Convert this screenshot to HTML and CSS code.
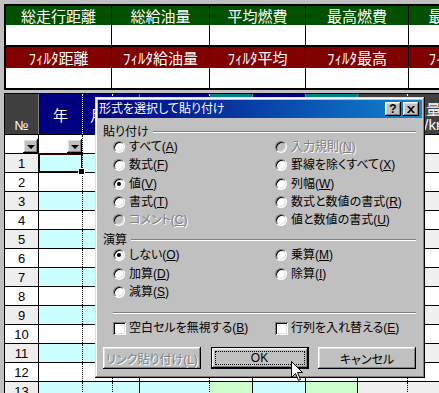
FILE: index.html
```html
<!DOCTYPE html>
<html lang="ja">
<head>
  <meta charset="UTF-8">
  <title>形式を選択して貼り付け</title>
  <link rel="stylesheet" href="styles.css">
</head>
<body>
  <div class="summary">
    <div class="sum-row sum-green"><div>総走行距離</div><div>総給油量</div><div>平均燃費</div><div>最高燃費</div><div>最低燃費</div></div>
    <div class="sum-row sum-blank"><div></div><div></div><div></div><div></div><div></div></div>
    <div class="sum-row sum-red"><div>ﾌｨﾙﾀ距離</div><div>ﾌｨﾙﾀ給油量</div><div>ﾌｨﾙﾀ平均</div><div>ﾌｨﾙﾀ最高</div><div>ﾌｨﾙﾀ最低</div></div>
    <div class="sum-row sum-blank"><div></div><div></div><div></div><div></div><div></div></div>
  </div>

  <div class="sheet">
    <div class="row head">
      <div class="no">№</div><div>年</div><div>月</div><div></div><div></div><div></div><div></div><div></div><div></div><div class="multi">油量<br>(L/km)</div>
    </div>
    <div class="row filter">
      <div><span class="dd"></span></div><div><span class="dd"></span></div><div></div><div></div><div></div><div></div><div></div><div></div><div></div><div></div>
    </div>
    <div class="row odd"><div>1</div><div class="sel"></div><div></div><div></div><div></div><div></div><div></div><div></div><div></div><div></div></div>
    <div class="row"><div>2</div><div></div><div></div><div></div><div></div><div></div><div></div><div></div><div></div><div></div></div>
    <div class="row odd"><div>3</div><div></div><div></div><div></div><div></div><div></div><div></div><div></div><div></div><div></div></div>
    <div class="row"><div>4</div><div></div><div></div><div></div><div></div><div></div><div></div><div></div><div></div><div></div></div>
    <div class="row odd"><div>5</div><div></div><div></div><div></div><div></div><div></div><div></div><div></div><div></div><div></div></div>
    <div class="row"><div>6</div><div></div><div></div><div></div><div></div><div></div><div></div><div></div><div></div><div></div></div>
    <div class="row odd"><div>7</div><div></div><div></div><div></div><div></div><div></div><div></div><div></div><div></div><div></div></div>
    <div class="row"><div>8</div><div></div><div></div><div></div><div></div><div></div><div></div><div></div><div></div><div></div></div>
    <div class="row odd"><div>9</div><div></div><div></div><div></div><div></div><div></div><div></div><div></div><div></div><div></div></div>
    <div class="row"><div>10</div><div></div><div></div><div></div><div></div><div></div><div></div><div></div><div></div><div></div></div>
    <div class="row odd"><div>11</div><div></div><div></div><div></div><div></div><div></div><div></div><div></div><div></div><div></div></div>
    <div class="row"><div>12</div><div></div><div></div><div></div><div></div><div></div><div></div><div></div><div></div><div></div></div>
    <div class="row odd"><div>13</div><div></div><div></div><div></div><div></div><div></div><div></div><div></div><div></div><div></div></div>
  </div>

  <div class="dialog">
    <div class="titlebar">
      <span class="title">形式を選択して貼り付け</span>
      <span class="tbtn help">?</span>
      <span class="tbtn close"><svg width="8" height="7" viewBox="0 0 8 7"><path d="M0 0h2l2 2.2L6 0h2L5 3.5 8 7H6L4 4.8 2 7H0l3-3.5z" fill="#000"/></svg></span>
    </div>
    <div class="dlg-body">
      <div class="group-head"><span>貼り付け</span><i class="groove"></i></div>
      <div class="options">
        <label class="opt"><span class="radio"></span>すべて(<u>A</u>)</label>
        <label class="opt disabled"><span class="radio"></span>入力規則(<u>N</u>)</label>
        <label class="opt"><span class="radio"></span>数式(<u>F</u>)</label>
        <label class="opt"><span class="radio"></span>罫線を除くすべて(<u>X</u>)</label>
        <label class="opt"><span class="radio on"></span>値(<u>V</u>)</label>
        <label class="opt"><span class="radio"></span>列幅(<u>W</u>)</label>
        <label class="opt"><span class="radio"></span>書式(<u>T</u>)</label>
        <label class="opt"><span class="radio"></span>数式と数値の書式(<u>R</u>)</label>
        <label class="opt disabled"><span class="radio"></span>コメント(<u>C</u>)</label>
        <label class="opt"><span class="radio"></span>値と数値の書式(<u>U</u>)</label>
      </div>
      <div class="group-head second"><span>演算</span><i class="groove"></i></div>
      <div class="options">
        <label class="opt"><span class="radio on"></span>しない(<u>O</u>)</label>
        <label class="opt"><span class="radio"></span>乗算(<u>M</u>)</label>
        <label class="opt"><span class="radio"></span>加算(<u>D</u>)</label>
        <label class="opt"><span class="radio"></span>除算(<u>I</u>)</label>
        <label class="opt"><span class="radio"></span>減算(<u>S</u>)</label>
      </div>
      <i class="groove separator"></i>
      <div class="checks">
        <label class="opt"><span class="check"></span>空白セルを無視する(<u>B</u>)</label>
        <label class="opt"><span class="check"></span>行列を入れ替える(<u>E</u>)</label>
      </div>
      <div class="actions">
        <span class="btn disabled">リンク貼り付け(L)</span>
        <span class="btn default">OK</span>
        <span class="btn">キャンセル</span>
      </div>
    </div>
  </div>

  <svg class="cursor" width="13" height="21" viewBox="0 0 13 21">
    <path d="M0.5 0.5V16.5L4.5 12.5L7.5 19.5L9.5 18.5L6.5 11.5H11.5Z" fill="#fff" stroke="#000"/>
  </svg>
</body>
</html>
```

FILE: styles.css
```css
* { box-sizing: border-box; }
html, body { margin: 0; height: 100%; }
body { background: #c0c0c0; overflow: hidden; position: relative; font-family: "Noto Sans CJK JP", "Liberation Sans", sans-serif; font-feature-settings: "palt"; }

/* summary block at the top */
.summary { margin: 4px 0 0 4px; width: 560px; border: 2px solid #000; }
.sum-row { display: flex; }
.sum-row > div { flex: none; border-right: 1px solid #000; display: flex; align-items: center; justify-content: center; color: #fff; font-size: 15px; line-height: 1; }
.sum-row > div:nth-child(1) { width: 106px; }
.sum-row > div:nth-child(2) { width: 98px; }
.sum-row > div:nth-child(3) { width: 96px; }
.sum-row > div:nth-child(4) { width: 103px; }
.sum-row > div:nth-child(5) { width: 100px; }
.sum-green { height: 19px; background: #005000; }
.sum-blank { height: 20px; background: #fff; }
.sum-red { height: 23px; background: #800000; border-top: 2px solid #000; }

/* worksheet */
.sheet { margin: 3px 0 0 4px; width: 620px; border-left: 1px solid #000; border-top: 1px solid #000; }
.row { display: flex; height: 19px; border-bottom: 1px solid #000; background: #fff; }
.row > div { flex: none; border-right: 1px solid #000; }
.row > div:nth-child(1) { width: 34px; }
.row > div:nth-child(2) { width: 44px; border-right-style: dotted; }
.row > div:nth-child(3) { width: 30px; border-right-style: dotted; }
.row > div:nth-child(4) { width: 27px; }
.row > div:nth-child(5) { width: 70px; border-right-style: dotted; }
.row > div:nth-child(6) { width: 43px; }
.row > div:nth-child(7) { width: 53px; }
.row > div:nth-child(8) { width: 52px; }
.row > div:nth-child(9) { width: 50px; border-right-style: dotted; }
.row > div:nth-child(10) { width: 92px; }

.row > div:first-child { display: flex; justify-content: center; align-items: flex-end; font: 13px/16px "Liberation Sans", sans-serif; }
.odd > div:first-child { background: #eeeeee; }
.odd > div:nth-child(n+2):nth-child(-n+5), .odd > div:nth-child(7) { background: #ccffff; }
.odd > div:nth-child(6), .odd > div:nth-child(8) { background: #ccffcc; }
.odd > div:nth-child(9), .odd > div:nth-child(10) { background: #f0f0f0; }

.head { height: 41px; }
.head > div { display: flex; align-items: center; justify-content: center; color: #fff; font-size: 15px; background: #000080; border-right-color: #808080; }
.head > div:nth-child(2), .head > div:nth-child(3), .head > div:nth-child(5), .head > div:nth-child(9) { border-right-color: #fff; }
.head > div:nth-child(6), .head > div:nth-child(8) { background: #008080; }
.head > div:nth-child(9), .head > div:nth-child(10) { background: #404040; }
.head > .no { background: #404040; font: 13px "Noto Sans CJK JP", sans-serif; }
.head > .multi { justify-content: flex-start; align-items: flex-end; padding: 0 0 2px 3px; line-height: 15px; font-family: "Liberation Sans", "Noto Sans CJK JP", sans-serif; }

.filter > div, .filter > div:first-child { display: flex; justify-content: flex-end; align-items: flex-end; }
.dd { width: 15px; height: 14px; background: #c0c0c0; display: flex; align-items: center; justify-content: center; box-shadow: inset -1px -1px #000, inset 1px 1px #fff, inset -2px -2px #808080, inset 2px 2px #dfdfdf; }
.dd::after { content: ""; border-left: 4px solid transparent; border-right: 4px solid transparent; border-top: 4px solid #000; margin-top: 1px; }

.sel { position: relative; box-shadow: inset 0 0 0 1px #300; }
.sel::after { content: ""; position: absolute; right: -3px; bottom: -3px; width: 5px; height: 5px; background: #000; border: 1px solid #fff; }

/* paste special dialog */
.dialog { position: absolute; left: 95px; top: 97px; width: 330px; height: 281px; padding: 3px; background: #c0c0c0; font-family: "Liberation Sans", "Noto Sans CJK JP", sans-serif; font-size: 12px; color: #000; box-shadow: inset -1px -1px #000, inset 1px 1px #dfdfdf, inset -2px -2px #808080, inset 2px 2px #fff; }
.titlebar { height: 18px; display: flex; align-items: center; padding: 0 3px 0 1px; color: #fff; background: linear-gradient(90deg, #000080, #1084d0); }
.title { flex: 1; line-height: 1; }
.tbtn { width: 16px; height: 14px; display: flex; align-items: center; justify-content: center; background: #c0c0c0; color: #000; font: bold 12px "Liberation Sans", sans-serif; box-shadow: inset -1px -1px #000, inset 1px 1px #fff, inset -2px -2px #808080, inset 2px 2px #dfdfdf; }
.tbtn.close { margin-left: 2px; }

.dlg-body { padding: 0 6px 0 5px; }
.group-head { display: flex; align-items: center; height: 12px; margin-top: 8px; line-height: 1; }
.group-head.second { margin-top: 5px; }
.groove { display: block; height: 2px; border-top: 1px solid #808080; border-bottom: 1px solid #fff; }
.group-head .groove { flex: 1; margin-left: 4px; }
.options { display: grid; grid-template-columns: 162px 1fr; grid-auto-rows: 18.25px; margin-left: 10px; }
.opt { display: flex; align-items: center; white-space: nowrap; line-height: 1; }
.opt.disabled { color: #808080; text-shadow: 1px 1px #fff; }
.opt u { text-decoration-thickness: 1px; text-underline-offset: 1px; }
.radio { position: relative; flex: none; width: 12px; height: 12px; margin-right: 4px; border-radius: 50%; background: #fff; border: 1px solid; border-color: #808080 #fff #fff #808080; box-shadow: inset 1px 1px #000, inset -1px -1px #dfdfdf; }
.disabled .radio { background: #c0c0c0; }
.radio.on::after { content: ""; position: absolute; left: 3px; top: 3px; width: 4px; height: 4px; border-radius: 50%; background: #000; }
.separator { margin: 11px 0 0 10px; }
.checks { display: grid; grid-template-columns: 162px 1fr; height: 16px; margin: 6px 0 0 10px; }
.check { flex: none; width: 13px; height: 13px; margin-right: 3px; background: #fff; box-shadow: inset 1px 1px #808080, inset -1px -1px #fff, inset 2px 2px #000, inset -2px -2px #dfdfdf; }

.actions { display: flex; justify-content: space-between; margin-top: 11px; }
.btn { position: relative; width: 98px; height: 22px; display: flex; align-items: center; justify-content: center; background: #c0c0c0; box-shadow: inset -1px -1px #000, inset 1px 1px #fff, inset -2px -2px #808080, inset 2px 2px #dfdfdf; }
.btn.disabled { color: #808080; text-shadow: 1px 1px #fff; }
.btn.default { border: 1px solid #000; }
.btn.default::after { content: ""; position: absolute; inset: 3px; border: 1px dotted #000; }

.cursor { position: absolute; left: 291px; top: 361px; }
```
